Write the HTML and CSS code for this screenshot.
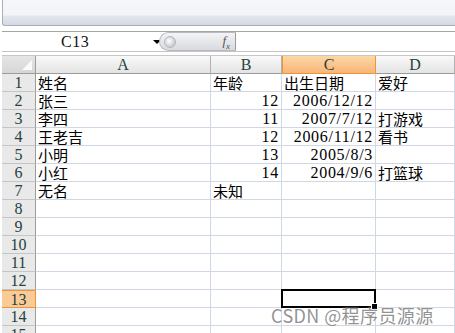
FILE: index.html
```html
<!DOCTYPE html>
<html lang="zh-CN">
<head>
    <meta charset="UTF-8">
    <title>Excel</title>
    <link rel="stylesheet" href="styles.css">
</head>
<body>
    <div class="ribbon"></div>

    <div class="formula-bar">
        <div class="name-box">
            <span class="name">C13</span>
            <span class="arrow"></span>
        </div>
        <div class="pill">
            <span class="knob"></span>
            <span class="fx">f<sub>x</sub></span>
        </div>
        <div class="formula-input"></div>
    </div>

    <div class="sheet">
        <div class="hd corner"><span class="tri"></span></div>
        <div class="hd col">A</div>
        <div class="hd col">B</div>
        <div class="hd col sel">C</div>
        <div class="hd col">D</div>

        <div class="hd row">1</div><div class="c">姓名</div><div class="c">年龄</div><div class="c">出生日期</div><div class="c">爱好</div>
        <div class="hd row">2</div><div class="c">张三</div><div class="c num">12</div><div class="c num">2006/12/12</div><div class="c"></div>
        <div class="hd row">3</div><div class="c">李四</div><div class="c num">11</div><div class="c num">2007/7/12</div><div class="c">打游戏</div>
        <div class="hd row">4</div><div class="c">王老吉</div><div class="c num">12</div><div class="c num">2006/11/12</div><div class="c">看书</div>
        <div class="hd row">5</div><div class="c">小明</div><div class="c num">13</div><div class="c num">2005/8/3</div><div class="c"></div>
        <div class="hd row">6</div><div class="c">小红</div><div class="c num">14</div><div class="c num">2004/9/6</div><div class="c">打篮球</div>
        <div class="hd row">7</div><div class="c">无名</div><div class="c">未知</div><div class="c"></div><div class="c"></div>
        <div class="hd row">8</div><div class="c"></div><div class="c"></div><div class="c"></div><div class="c"></div>
        <div class="hd row">9</div><div class="c"></div><div class="c"></div><div class="c"></div><div class="c"></div>
        <div class="hd row">10</div><div class="c"></div><div class="c"></div><div class="c"></div><div class="c"></div>
        <div class="hd row">11</div><div class="c"></div><div class="c"></div><div class="c"></div><div class="c"></div>
        <div class="hd row">12</div><div class="c"></div><div class="c"></div><div class="c"></div><div class="c"></div>
        <div class="hd row sel">13</div><div class="c"></div><div class="c"></div><div class="c active"><span class="handle"></span></div><div class="c"></div>
        <div class="hd row">14</div><div class="c"></div><div class="c"></div><div class="c"></div><div class="c"></div>
        <div class="hd row">15</div><div class="c"></div><div class="c"></div><div class="c"></div><div class="c"></div>

        <div class="watermark">CSDN @程序员源源</div>
    </div>
</body>
</html>
```

FILE: styles.css
```css
body {
    margin: 0;
    width: 455px;
    height: 333px;
    overflow: hidden;
    background-color: #ffffff;
    font-family: "Noto Sans CJK SC", sans-serif;
}

/* ribbon bottom edge */
.ribbon {
    height: 25px;
    margin-left: 2px;
    border-left: 1px solid #a9aeb8;
    border-bottom: 1px solid #a9aeb8;
    border-bottom-left-radius: 3px;
    background: linear-gradient(#f5f7fa 0, #f2f4f8 60%, #e2e6ee 64%, #d5dae4 100%);
}

.formula-bar {
    display: flex;
    height: 19px;
    margin-top: 5px;
    margin-left: 2px;
    border-top: 1px solid #a5a5a5;
    border-bottom: 1px solid #c4c4c4;
}

.name-box {
    width: 157px;
    display: flex;
    align-items: center;
    background-color: #ffffff;
}

.name {
    font-family: "Liberation Serif", serif;
    font-size: 16px;
    letter-spacing: 0.5px;
    color: #111;
    margin-left: 59px;
}

.arrow {
    margin-left: 64px;
    width: 0;
    height: 0;
    border-left: 4px solid transparent;
    border-right: 4px solid transparent;
    border-top: 4px solid #000;
}

.pill {
    width: 77px;
    display: flex;
    align-items: center;
    justify-content: space-between;
    border-radius: 10px 0 0 10px;
    border: 1px solid #b7bac0;
    border-right: 1px solid #9a9a9a;
    box-sizing: border-box;
    background: linear-gradient(#f4f4f6, #d9dade);
    padding: 0 5px 0 4px;
}

.knob {
    width: 10px;
    height: 10px;
    border-radius: 50%;
    background: radial-gradient(circle at 40% 40%, #ffffff, #c9ccd2 70%, #aeb2ba);
    border: 1px solid #b4b7bd;
}

.fx {
    font-family: "Liberation Serif", serif;
    font-style: italic;
    font-size: 13px;
    color: #555;
}

.fx sub {
    font-size: 9px;
}

.formula-input {
    flex: 1;
    background-color: #ffffff;
}

/* grid */
.sheet {
    position: relative;
    display: grid;
    grid-template-columns: 34px 175px 71px 94px 1fr;
    grid-auto-rows: 18px;
    margin-top: 3px;
    margin-left: 2px;
    border-top: 1px solid #c8c8c8;
}

.c {
    box-sizing: border-box;
    border-right: 1px solid #d0d7e5;
    border-bottom: 1px solid #d0d7e5;
    padding: 0 2px;
    font-size: 15px;
    line-height: 17px;
    color: #000;
    white-space: nowrap;
}

.c.num {
    text-align: right;
    font-family: "Liberation Serif", serif;
    font-size: 16px;
    letter-spacing: 0.7px;
    padding-right: 2px;
}

.hd {
    box-sizing: border-box;
    font-family: "Liberation Serif", serif;
    font-size: 16px;
    line-height: 17px;
    color: #27413e;
    text-align: center;
}

.hd.col {
    background: linear-gradient(#f9f9f9, #e4e4e4);
    border-right: 1px solid #b1b1b1;
    border-bottom: 1px solid #9c9c9c;
}

.hd.row {
    background-color: #e9e9e9;
    border-right: 1px solid #9c9c9c;
    border-bottom: 1px solid #c5c5c5;
}

.hd.corner {
    position: relative;
    background: linear-gradient(#e6e6e6, #d6d6d6);
    border-right: 1px solid #9c9c9c;
    border-bottom: 1px solid #9c9c9c;
}

.tri {
    position: absolute;
    right: 3px;
    bottom: 3px;
    width: 0;
    height: 0;
    border-left: 10px solid transparent;
    border-bottom: 10px solid #fbfbfb;
}

.hd.col.sel {
    background: linear-gradient(#fcd7a6, #f9b578);
    border: 1px solid #f29436;
    border-top: none;
}

.hd.row.sel {
    background-color: #f8cb98;
    border: 1px solid #f29436;
    border-left: none;
}

.c.active {
    position: relative;
    border: 2px solid #000;
    margin: -1px 0 0 -1px;
}

.handle {
    position: absolute;
    right: -4px;
    bottom: -4px;
    width: 5px;
    height: 5px;
    background-color: #000;
    border: 1px solid #fff;
}

.watermark {
    position: absolute;
    left: 269px;
    top: 246px;
    font-family: "Noto Sans CJK SC", sans-serif;
    font-size: 18px;
    letter-spacing: 0.4px;
    color: rgba(110, 110, 110, 0.75);
    text-shadow: 0 0 2px #ffffff;
}
```
